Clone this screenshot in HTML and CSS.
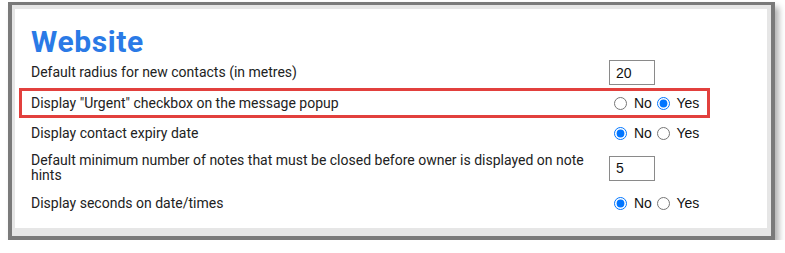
FILE: index.html
```html
<!DOCTYPE html>
<html>
<head>
<meta charset="utf-8">
<link rel="stylesheet" href="styles.css">
</head>
<body>
<div class="frame">
  <div class="panel">
    <h1 class="title">Website</h1>
    <div class="rows">
      <div class="row">
        <div class="label">Default radius for new contacts (in metres)</div>
        <div class="control"><input class="num" type="text" value="20"></div>
      </div>
      <div class="row highlight">
        <div class="label">Display "Urgent" checkbox on the message popup</div>
        <div class="control"><input type="radio" name="urgent"> No<input type="radio" name="urgent" checked> Yes</div>
      </div>
      <div class="row">
        <div class="label">Display contact expiry date</div>
        <div class="control"><input type="radio" name="expiry" checked> No<input type="radio" name="expiry"> Yes</div>
      </div>
      <div class="row tall">
        <div class="label">Default minimum number of notes that must be closed before owner is displayed on note hints</div>
        <div class="control"><input class="num" type="text" value="5"></div>
      </div>
      <div class="row">
        <div class="label">Display seconds on date/times</div>
        <div class="control"><input type="radio" name="secs" checked> No<input type="radio" name="secs"> Yes</div>
      </div>
    </div>
  </div>
</div>
</body>
</html>
```
FILE: styles.css
```css
html, body {
  margin: 0;
  padding: 0;
  background: #ffffff;
}
.frame {
  margin: 2px 0 0 8px;
  width: 767px;
  height: 238px;
  box-sizing: border-box;
  border: 4px solid #7a7a7a;
  border-top-width: 3px;
  background: #e6e6e6;
  padding: 4px 4px 8px 3px;
  box-shadow: 4px 5px 6px rgba(0, 0, 0, 0.3);
}
.panel {
  background: #ffffff;
  height: 100%;
  padding: 17px 0 0 4px;
  box-sizing: border-box;
  font-family: Roboto, "Liberation Sans", sans-serif;
  color: #222222;
}
.title {
  margin: 0 0 0 12px;
  font-family: Roboto, "Liberation Sans", sans-serif;
  font-weight: 700;
  font-size: 30px;
  line-height: 32px;
  letter-spacing: 0.6px;
  color: #2a7ae6;
}
.rows {
  width: 691px;
  margin-top: -1px;
}
.row {
  display: flex;
  align-items: center;
  min-height: 24px;
  padding: 0 0 0 9px;
  border: 3px solid transparent;
  font-size: 14px;
  line-height: 15px;
}
.row.highlight {
  border-color: #e2403d;
}
.row.tall {
  min-height: 34px;
}
.label {
  width: 560px;
  flex: none;
}
.control {
  margin-left: 18px;
  font-family: "Liberation Sans", Arial, sans-serif;
  font-size: 14px;
  color: #111111;
  display: flex;
  align-items: center;
  white-space: pre;
}
.control input[type="radio"] {
  width: 13px;
  height: 13px;
  margin: 0 3px 0 5px;
}
.num {
  width: 46px;
  height: 25px;
  box-sizing: border-box;
  border: 1px solid #8a8a8a;
  padding: 1px 6px;
  font-family: "Liberation Sans", Arial, sans-serif;
  font-size: 14px;
  color: #111111;
  margin: 0;
}
```
